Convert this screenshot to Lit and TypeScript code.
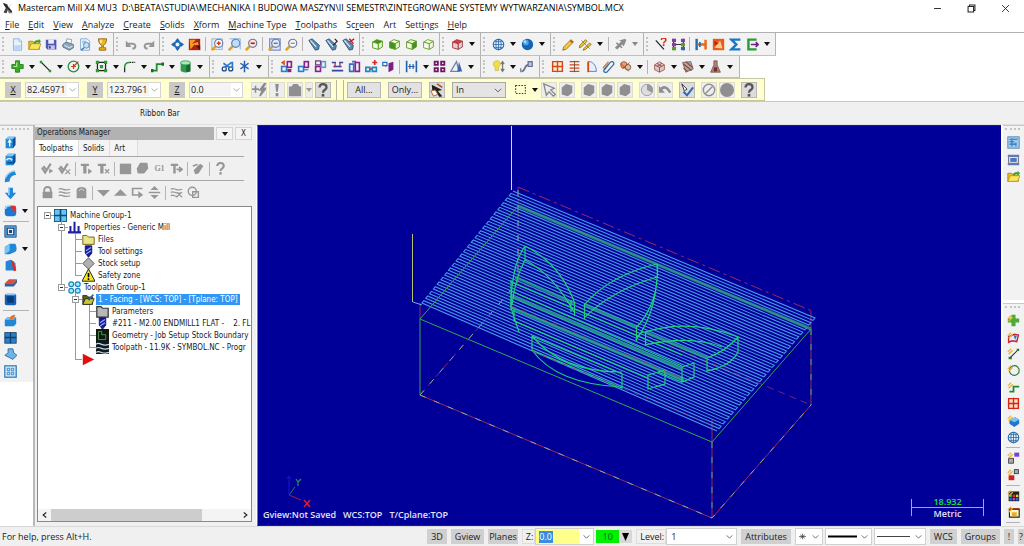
import { LitElement, html, css, svg, nothing } from "lit";
import { customElement, property } from "lit/decorators.js";

const cube = (c: string, t: string, f: string, r: string) => svg`<g stroke=${c} stroke-width="1.2" stroke-linejoin="round"><path d="M2 5 7 2l7 2-5 3z" fill=${t}/><path d="M2 5l7 2v7l-7-2z" fill=${f}/><path d="M9 7l5-3v7l-5 3z" fill=${r}/></g>`;
const lens = (glass: string, mark: unknown) => svg`<path d="M1 15l5-5" stroke="#e0a020" stroke-width="3"/><circle cx="9.5" cy="6.5" r="5" fill=${glass} stroke="#6a7c98" stroke-width="1.4"/>${mark}`;
const torch = (mark: unknown) => svg`<path d="M1 3l4-2 9 8-1 5-4 1z" fill="#5b87b0" stroke="#2b4d70"/><path d="M3 3l7 8" stroke="#d5ecff" stroke-width="1.5"/>${mark}`;
const solid = (mark: unknown) => svg`<path d="M2 4l3-3h9v10l-3 4H2z" fill="#1f86d8"/><path d="M2 4l3-3h9l-3 3z" fill="#7cc4f4"/><path d="M11 4l3-3v10l-3 4z" fill="#0c4f96"/>${mark}`;
const hex = (c: string) => svg`<path d="M2 5l5-4 7 2v8l-5 4-7-2z" fill=${c}/>`;
const q = (c: string) => svg`<path d="M4 5c0-5 8-5 8 0 0 3-4 2.500-4 6" fill="none" stroke=${c} stroke-width="2.600"/><rect x="6.500" y="12.500" width="3" height="3" fill=${c}/>`;
const G = "#969696";
const bits = (a: string, b: string, extra: unknown = nothing) => svg`<g fill="none" stroke-width="2"><rect x="2" y="8" width="6" height="6" stroke=${a}/><rect x="9" y="2" width="5" height="7" stroke=${b}/></g>${extra}`;
const spark = svg`<path d="M1 6l4-4M2 9l5-5" stroke="#e8b030" stroke-width="1.600"/>`;

const ICONS: Record<string, unknown> = {
  app: svg`<path d="M1 1l6 2 2 5-3 7-4-1 3-6z" fill="#444"/><path d="M14 1L9 6l5 9H9L7 9" fill="#777"/><path d="M3 3l10 10" stroke="#222" stroke-width="2"/>`,
  new: svg`<path d="M3 1h7l3 3v11H3z" fill="#e6f1ff" stroke="#84a8d4"/><path d="M10 1v3h3" fill="#fff" stroke="#84a8d4"/><path d="M4 9h8v5H4z" fill="#b9d4f5"/>`,
  open: svg`<path d="M1 4h5l1 2h7v8H1z" fill="#e8c02c" stroke="#a88410"/><path d="M1 14l3-7h12l-3 7z" fill="#fbe55c" stroke="#b89418"/><path d="M7 6c1-3 3-4 6-3V1l3 3-3 3V5c-2-.500-3 0-4 2z" fill="#3b9b2b"/>`,
  save: svg`<path d="M1 2h13v12H3l-2-2z" fill="#5056b4"/><path d="M4 2h7v5H4z" fill="#e9ebff"/><path d="M4 9h8v5H4z" fill="#c5c8ee"/><path d="M5 10h2v3H5z" fill="#30368e"/>`,
  print: svg`<path d="M5 6l1-5 6 1-1 5" fill="#fff" stroke="#7d92ab"/><path d="M1 8l4-3 9 3v4l-5 3-8-4z" fill="#8ea5c0" stroke="#52657d"/><path d="M3 9l6 3 4-2" stroke="#fff" fill="none"/>`,
  preview: svg`<path d="M2 1h8l3 3v11H2z" fill="#eef6ff" stroke="#6f9ccc"/><path d="M4 4h5M4 6h4" stroke="#6f9ccc"/><circle cx="9" cy="9" r="3.500" fill="#bfe2ff" stroke="#4e7aa8"/><path d="M6 12l-3 3" stroke="#4e7aa8" stroke-width="2"/>`,
  cup: svg`<path d="M3 1h10c0 5-2 7-4 8v3h3v3H4v-3h3V9C5 8 3 6 3 1z" fill="#f0b41c" stroke="#8b5a08"/><path d="M6 2v4" stroke="#fff3a0" stroke-width="2"/>`,
  undo: svg`<path d="M3 7h6c5 0 5 6 0 6" fill="none" stroke=${G} stroke-width="2.400"/><path d="M1 3v8h7z" fill=${G}/>`,
  redo: svg`<path d="M13 7H7c-5 0-5 6 0 6" fill="none" stroke=${G} stroke-width="2.400"/><path d="M15 3v8H8z" fill=${G}/>`,
  pan: svg`<path d="M8 0l3 4H5zM8 16l3-4H5zM0 8l4-3v6zM16 8l-4-3v6z" fill="#1a68b8"/><circle cx="8" cy="8" r="3.500" fill="none" stroke="#1a68b8" stroke-width="2"/>`,
  repaint: svg`<path d="M1 1h14v14H1z" fill="#b02010"/><path d="M2 2h8L5 7l7-2 2 8-6-5-5 6z" fill="#f69a28"/><path d="M9 9l6 6V9z" fill="#501008"/>`,
  zin: svg`<path d="M1 1h13v13H1z" fill="#e6eefc" stroke="#88a4d8"/>${lens("#fff", svg`<path d="M9.500 4v5M7 6.500h5" stroke="#d8381c" stroke-width="1.800"/>`)}`,
  zwin: lens("#b9dcff", svg`<path d="M2 1h13v13" fill="none" stroke="#6ea0e0"/>`),
  zout: lens("#ffe5e0", svg`<path d="M7 6.500h5" stroke="#c01810" stroke-width="2"/>`),
  zpr: svg`<path d="M2 1h13v14H2z" fill="#dfe8fc" stroke="#8090c8" stroke-width="1.500"/>${lens("#dfeaff", svg`<path d="M7 6.500h5" stroke="#4060b0" stroke-width="1.500"/>`)}`,
  zhalf: lens("#f4f7ff", svg`<path d="M7 6.500h5" stroke="#c08040" stroke-width="1.500"/>`),
  t1: torch(nothing),
  t2: torch(svg`<path d="M12 1l3 3-5 5" fill="none" stroke="#223" stroke-width="1.500"/>`),
  t3: torch(svg`<path d="M9 5l6-4M9 1l5 6" stroke="#d02020" stroke-width="1.800"/>`),
  c1: cube("#5e9a26", "#3f9420", "#f6ffe6", "#e6f8c8"),
  c2: cube("#5e9a26", "#f6ffe6", "#3f9420", "#e6f8c8"),
  c3: cube("#5e9a26", "#e6f8c8", "#f6ffe6", "#3f9420"),
  c4: cube("#6da435", "#f6ffe6", "#fbfff2", "#eef9dd"),
  c5: cube("#a04048", "#e03838", "#f0c8c8", "#d8d4dc"),
  globe: svg`<circle cx="8" cy="8" r="6.500" fill="#eaf5ff" stroke="#2a6aa8" stroke-width="1.300"/><path d="M1.500 8h13M8 1.500v13M3 4.500h10M3 11.500h10" stroke="#2a6aa8"/><ellipse cx="8" cy="8" rx="3.200" ry="6.500" fill="none" stroke="#2a6aa8"/>`,
  ball: svg`<circle cx="8" cy="8" r="7" fill="#1565b4"/><circle cx="6" cy="5.500" r="3.500" fill="#4fa4e8"/><circle cx="5" cy="4.500" r="1.500" fill="#b9e0ff"/>`,
  pen: svg`<path d="M2 11L11 2l3 3-9 9-4 1z" fill="#f4c840" stroke="#8c6410"/><path d="M11 2l3 3-2 1-2-2z" fill="#c84030"/>`,
  pens: svg`<path d="M1 9L8 2l2 2-7 7-3 1zM6 13l7-7 2 2-7 6-3 1z" fill="#f4c840" stroke="#8c6410"/><path d="M3 3l10 10" stroke="#a87818"/>`,
  hatchg: svg`<path d="M1 12l8-8-3-1 8-2 1 2-3 7-2-2-6 6z" fill="#8c8c8c"/><path d="M3 6l7 6" stroke="#8c8c8c" stroke-width="2"/>`,
  qline: svg`<path d="M1 3l10 11" stroke="#222" stroke-width="1.500"/><g transform="translate(5 -1) scale(.7)">${q("#e02818")}</g>`,
  blocks: svg`<path d="M2 1v14M14 1v14M2 8h12" stroke="#333" stroke-width="1.500"/><g fill="#8a3aa8"><path d="M0 1h5v4H0zM11 1h5v4h-5zM0 6h5v4H0z"/></g><path d="M11 6h5v4h-5zM0 11h5v4H0z" fill="#5c9c30"/><path d="M11 11h5v4h-5z" fill="#2c6ab8"/>`,
  split: svg`<path d="M2 1v14" stroke="#1a70c0" stroke-width="3"/><path d="M3 8h10M13 2v12" stroke="#e86818" stroke-width="3"/><path d="M6 5v6" stroke="#1a70c0" stroke-width="2"/>`,
  orange: svg`<path d="M1 1h14v14H1z" fill="#e85a18"/><path d="M3 12l7-9 3 10z" fill="#ffc890"/><path d="M3 3l5 4-5 2z" fill="#b02808"/>`,
  sigma: svg`<path d="M14 2H3l6 6-6 6h11" fill="none" stroke="#1878c8" stroke-width="3"/>`,
  cgreen: svg`<path d="M13 2H3v12h10" fill="none" stroke="#2c9a38" stroke-width="3"/><path d="M6 8h9M12 5l3 3-3 3" stroke="#702080" stroke-width="2" fill="none"/>`,
  plus: svg`<path d="M5.500 1h5v4.500H15v5h-4.500V15h-5v-4.500H1v-5h4.500z" fill="#3caa28" stroke="#1d7a14"/><path d="M7 3v5H3" stroke="#a8ec90" stroke-width="1.500" fill="none"/>`,
  line: svg`<path d="M2 2l12 12" stroke="#222" stroke-width="1.500"/><path d="M1 1h3v3H1zM12 12h3v3h-3z" fill="#2c9a38"/>`,
  circ: svg`<circle cx="8" cy="8" r="6.500" fill="none" stroke="#2f8a4a" stroke-width="1.600"/><path d="M8 8l6-6M5 8h6M8 5v6" stroke="#e03818" stroke-width="1.500"/>`,
  rect: svg`<path d="M3 3h10v10H3z" fill="none" stroke="#222" stroke-width="1.500"/><path d="M1 1h4v4H1zM11 1h4v4h-4zM1 11h4v4H1zM11 11h4v4h-4zM6 6h4v4H6z" fill="#2c9a38"/>`,
  fillet: svg`<path d="M2 15V9" stroke="#222" stroke-width="1.500"/><path d="M2 9c0-4 2-6 6-6" fill="none" stroke="#2c9a38" stroke-width="2"/><path d="M8 3h7" stroke="#222" stroke-width="1.500" stroke-dasharray="2 1"/>`,
  spline: svg`<path d="M1 13h6V5h8" fill="none" stroke="#1f8c2c" stroke-width="2.200"/><path d="M0 11h3v4H0zM13 3h3v4h-3z" fill="#176a20"/>`,
  cyl: svg`<path d="M2 3v10c0 3 12 3 12 0V3z" fill="#2f9a50"/><path d="M9 5h5v9l-5 1z" fill="#176834"/><ellipse cx="8" cy="3.500" rx="6" ry="2.500" fill="#a8e8b8" stroke="#2f9a50"/>`,
  sci: svg`<circle cx="4" cy="11" r="2.500" fill="none" stroke="#184888" stroke-width="1.500"/><circle cx="12" cy="11" r="2.500" fill="none" stroke="#184888" stroke-width="1.500"/><path d="M5 9l8-6M10 9L3 4M14 2v8" stroke="#2878c8" stroke-width="2"/>`,
  star: svg`<path d="M8 1v14M3 4l10 7M13 4L3 11" stroke="#2060b0" stroke-width="1.800"/>`,
  b1: bits("#2a80d0", "#8a2090", svg`<path d="M1 3l5-3v7z" fill="#e05818"/><path d="M9 11h5v4H9z" fill="#8a2090"/>`),
  b2: bits("#2a80d0", "#8a2090", svg`<path d="M8 12h6" stroke="#2a80d0" stroke-width="1.500"/>`),
  b3: bits("#8a2090", "#58a0c8", svg`<path d="M2 1h6v5H2z" fill="none" stroke="#704080" stroke-width="1.500"/>`),
  b4: svg`<path d="M1 3h5M10 3h5M1 13h14M3 8h10" stroke="#3048a0" stroke-width="2"/><path d="M5 3v6M11 3v6" stroke="#b02060" stroke-width="1.500"/>`,
  b5: svg`<path d="M2 5h5v9H2zM5 2h5" fill="none" stroke="#2a70c8" stroke-width="2"/><path d="M9 3h5v11H9z" fill="none" stroke="#8a2090" stroke-width="2"/>`,
  b6: svg`<path d="M1 9h5v5H1zM9 9h5v5H9z" fill="none" stroke="#1888c8" stroke-width="2"/><path d="M6 11h3M12 0v6M9 3h6" stroke="#d82828" stroke-width="2"/>`,
  b7: svg`<path d="M8 4l6-2v10l-6 3z" fill="#7a2080"/><path d="M1 3h5v4H1zM4 8l3-2" fill="none" stroke="#2a70c8" stroke-width="1.500"/>`,
  dim: svg`<path d="M2 1v14M14 1v14" stroke="#2060b0" stroke-width="2"/><path d="M4 8h8M6 5v6M10 5v6" stroke="#2060b0" stroke-width="1.500"/>`,
  four: svg`<path d="M2 2h4v4H2zM10 2h4v4h-4zM2 10h4v4H2zM10 10h4v4h-4z" fill="none" stroke="#701868" stroke-width="2.200"/>`,
  tri: svg`<path d="M1 14L8 2l3 12z" fill="none" stroke="#7080b0" stroke-width="1.500"/><path d="M11 2l4 12H9z" fill="#3868a8"/>`,
  bulb: svg`<path d="M6 1c6 0 5 6 2 8v4H4V9C0 7 1 1 6 1z" fill="#f0dc48" stroke="#d0bc50"/><path d="M13 3v10M11 5l2-3 2 3M11 11l2 3 2-3" stroke="#777" stroke-width="1.500" fill="none"/>`,
  step: svg`<path d="M2 14c5 0 3-8 8-8h3" fill="none" stroke="#667090" stroke-width="2"/><path d="M10 2h5v6h-5zM1 10v5" fill="#bcc4d8" stroke="#667090" stroke-width="1.500"/>`,
  gridr: svg`<path d="M2 2h12v12H2zM8 1v14M1 8h14" fill="#ffe8d0" stroke="#d04818" stroke-width="1.700"/>`,
  rows: svg`<path d="M2 2h12M2 6h12M2 10h12M2 14h12" stroke="#d04818" stroke-width="1.700"/><path d="M8 1v14" stroke="#704030"/>`,
  sail: svg`<path d="M4 14V2h2c5 1 8 6 8 12z" fill="#e8eefa" stroke="#3870b8"/><path d="M4 2v13" stroke="#d04818" stroke-width="2.200"/>`,
  clip: svg`<path d="M3 12l7-9c4-3 6 2 3 4l-7 8c-3 1-5-1-3-4l5-6" fill="none" stroke="#3870a8" stroke-width="1.600"/><path d="M1 10l7-8" stroke="#d07030" stroke-width="1.500"/>`,
  shell: svg`<circle cx="6" cy="6" r="4" fill="#e8a070" stroke="#a04820"/><circle cx="11" cy="9" r="3.500" fill="#d8c0a8" stroke="#804830"/><path d="M2 4l10 10M4 11l9-8" stroke="#a04820"/>`,
  part: svg`<path d="M2 6l6-4 6 4v6l-6 3-6-3z" fill="#d8c8c8" stroke="#a05040"/><path d="M2 6l6 3 6-3M8 9v6M5 4l6 4M11 4L5 8" stroke="#a03828" fill="none"/>`,
  mesh: svg`<path d="M2 3l10-1 3 9-9 4z" fill="#b0a8a8" stroke="#605858"/><path d="M3 5l10 8M6 2l8 7M3 10l5 4" stroke="#904838" stroke-width="1.500"/>`,
  tower: svg`<path d="M6 1h4v5l4 9H2l4-9z" fill="#b08078" stroke="#78564e"/><path d="M6 9h4v5H6z" fill="#703028"/>`,
  flash: svg`<path d="M4 3v8M0 7h8M14 1L9 8h3l-3 7 7-9h-4l3-5z" stroke="#8c8c8c" fill="#8c8c8c" stroke-width="1.800"/>`,
  bang: svg`<path d="M6 1h4l-1 9H7zM6.500 11.500h3v3.500h-3z" fill="#8c8c8c"/>`,
  block: svg`<path d="M1 4h3l2-3h5l2 3h2v11H1z" fill="#8f8f8f"/>`,
  help: q("#555"),
  hand: svg`<path d="M2 2l12 6-5 1 5 6-3 1-5-6-3 3z" fill="#222"/><path d="M1 9l5-1 3 5-5 2z" fill="#fff" stroke="#b05818"/><path d="M8 1l6 4" stroke="#b05818" stroke-width="2"/>`,
  dash: svg`<path d="M2 3h12v10H2z" fill="none" stroke="#444" stroke-width="1.300" stroke-dasharray="2 1.500"/>`,
  arrow: svg`<path d="M2 1l3 13 3-4 5 5 2-2-5-5 4-2z" fill="#eee" stroke="#888" stroke-width="1.500"/>`,
  hexg: hex("#8f8f8f"),
  half: svg`<circle cx="8" cy="8" r="6.500" fill="#ddd" stroke="#999"/><path d="M8 8V1.500A6.500 6.500 0 0 1 14 11z" fill="#999"/>`,
  bend: svg`<path d="M2 9c4-6 8-5 12 2" fill="none" stroke="#8f8f8f" stroke-width="3"/><path d="M1 3v8h7z" fill="#8f8f8f"/>`,
  pick: svg`<path d="M2 1l3 8 3-2z" fill="#fff" stroke="#222"/><path d="M4 10l4 4 7-9" stroke="#2a68b0" stroke-width="2.200" fill="none"/>`,
  no: svg`<circle cx="8" cy="8" r="6.500" fill="none" stroke="#8f8f8f" stroke-width="1.600"/><path d="M4 12l8-8" stroke="#8f8f8f" stroke-width="1.600"/>`,
  dot: svg`<circle cx="8" cy="8" r="8" fill="#8f8f8f"/>`,
  s1: solid(svg`<path d="M7 13V6M5 8l2-3 2 3" stroke="#fff" stroke-width="1.600" fill="none"/>`),
  s2: solid(svg`<path d="M3 9c2-3 5-3 7 0" stroke="#d8f0ff" stroke-width="2" fill="none"/><path d="M4 12h7" stroke="#0c4f96" stroke-width="2"/>`),
  s3: svg`<path d="M1 15C1 7 6 2 13 1l2 5c-5 0-8 3-8 8z" fill="#1f86d8"/><path d="M2 9c2-4 6-7 11-8" stroke="#9ad4fa" stroke-width="2" fill="none"/>`,
  s4: svg`<path d="M5 1h6v6h4l-7 8-7-8h4z" fill="#1f86d8"/><path d="M6 1v9" stroke="#9ad4fa" stroke-width="2"/>`,
  s5: svg`<rect x="1" y="2" width="14" height="13" rx="3" fill="#1f78d0"/><path d="M2 6c0-3 2-4 6-4" stroke="#a8dcff" stroke-width="2" fill="none"/><path d="M8 2h6l1 7c-3 1-6-2-7-7z" fill="#e03030"/>`,
  s6: svg`<path d="M1 1h14v14H1z" fill="#58a8e8" stroke="#184878"/><path d="M4 4h8v8H4z" fill="#fff" stroke="#184878" stroke-width="1.500"/><path d="M6 6h4v4H6z" fill="#184878"/>`,
  s7: svg`<path d="M1 6l6-4h7c2 4 2 8 0 10l-7 3H1z" fill="#1f86d8"/><path d="M1 6l6-4v9l-6 4z" fill="#7cc4f4"/>`,
  s8: svg`<path d="M2 3l6-2 6 4 1 9H2z" fill="#1f86d8"/><path d="M8 1l4 2 3 11-3 1z" fill="#d83028"/>`,
  s9: svg`<path d="M1 9l5-5h10l-4 5z" fill="#d85040"/><path d="M1 9h11l4-5v4l-4 5H1z" fill="#3a5a9a"/>`,
  s10: svg`<rect x="1" y="1" width="14" height="14" rx="2" fill="#1560b0"/><rect x="4" y="4" width="8" height="8" fill="#0a3a78"/><path d="M2 2h12" stroke="#8cc8f8" stroke-width="1.500"/>`,
  s11: svg`<path d="M1 7l3-3h11v8l-3 3H1z" fill="#1f86d8"/><path d="M1 7l3-3h11l-3 3z" fill="#7cc4f4"/><path d="M6 7c1-4 4-6 8-6l-2 5z" fill="#e87030"/>`,
  s12: svg`<rect x="1" y="2" width="14" height="13" fill="#2a80c8" stroke="#103c68"/><path d="M1 8h14M8 2v13" stroke="#103c68" stroke-width="1.600"/>`,
  s13: svg`<path d="M5 1h6l1 5 4 3-5 5-4-2-6-3 4-3z" fill="#6ab4e8" stroke="#2a6098"/>`,
  s14: svg`<rect x="1" y="1" width="14" height="14" fill="#d0eafc" stroke="#2a78b8" stroke-width="1.500"/><path d="M4 4h3v3H4zM9 4h3v3H9zM4 9h3v3H4zM9 9h3v3H9z" fill="none" stroke="#2a78b8"/>`,
  r1: svg`<rect x="1" y="1" width="14" height="14" fill="#9ccaf0" stroke="#4a80b0"/><path d="M3 4h10M3 7h6M3 10h8M6 3v10M11 8v5" stroke="#3a74b0" stroke-width="1.300"/>`,
  r2: svg`<path d="M1 2h14v3H1zM1 12h14v3H1z" fill="#6878b0"/><rect x="4" y="6" width="8" height="5" fill="#4a78c8"/><path d="M2 5v7M14 5v7" stroke="#445"/>`,
  r4: svg`<path d="M5.500 1h5v4.500H15v5h-4.500V15h-5v-4.500H1v-5h4.500z" fill="#4caa38"/>${spark}`,
  r5: svg`<path d="M2 7l7-3 5 1-2 8-6-1-4 2z" fill="#e8ecf8" stroke="#c02838" stroke-width="1.800"/><path d="M8 5l4 1-2 5" fill="#3a70b8"/>${spark}`,
  r6: svg`<path d="M4 13L13 4" stroke="#222" stroke-width="1.300"/><path d="M2 12h4v3H2zM12 2h3v3h-3z" fill="#2c7a38"/>${spark}`,
  r7: svg`<circle cx="9" cy="8" r="6" fill="none" stroke="#2c7a38" stroke-width="1.400"/>${spark}`,
  r8: svg`<path d="M3 13h5V7h7" fill="none" stroke="#1f8c2c" stroke-width="2.200"/>${spark}`,
  r9: svg`<path d="M2 2h12v12H2zM8 1v14M1 8h14" fill="#ffe0c0" stroke="#d02818" stroke-width="1.700"/>`,
  r10: svg`<path d="M3 7l7-3 5 3v5l-6 4-6-4z" fill="#1f78d0"/><path d="M3 7l7-3 5 3-6 3z" fill="#7cc4f4"/>${spark}`,
  r12: svg`<rect x="9" y="2" width="6" height="5" fill="#7040e0"/><rect x="2" y="9" width="6" height="6" fill="#aaa" stroke="#333"/>${spark}`,
  r13: svg`<rect x="9" y="2" width="5" height="5" fill="#9ab" stroke="#333"/><rect x="2" y="9" width="7" height="6" fill="#d02020"/>${spark}`,
  r14: svg`<rect x="2" y="3" width="13" height="12" fill="#222"/><path d="M3 7h3v3H3z" fill="#20c040"/><path d="M7 7h3v3H7z" fill="#e03030"/><path d="M11 7h3v3h-3z" fill="#e0d020"/><path d="M3 11h3v3H3zM11 11h3v3h-3z" fill="#3060e0"/><path d="M7 11h3v3H7z" fill="#c040c0"/>${spark}`,
  r15: svg`<path d="M3 5h12v10H3z" fill="#fff6c0" stroke="#222" stroke-width="1.400"/><path d="M6 9h6v5H6z" fill="#e8b020"/><path d="M3 5h12" stroke="#a02010" stroke-width="2"/>${spark}`,
  k1: svg`<path d="M1 7l4 6 7-11M3 5l3 4" stroke=${G} stroke-width="2.600" fill="none"/><path d="M10 8l5 3-5 3z" fill=${G}/>`,
  k2: svg`<path d="M1 7l4 6 7-11M3 5l3 4" stroke=${G} stroke-width="2.600" fill="none"/><path d="M9 9l6 6M15 9l-6 6" stroke=${G} stroke-width="1.500"/>`,
  k3: svg`<path d="M1 2h10v3H8v9H4V5H1z" fill=${G}/><path d="M10 8l5 3.500-5 3.500z" fill=${G}/>`,
  k4: svg`<path d="M1 2h10v3H8v9H4V5H1z" fill=${G}/><path d="M10 9l5 5M15 9l-5 5" stroke=${G} stroke-width="1.600"/>`,
  k5: svg`<path d="M1 2h14v13H1z" fill=${G}/>`,
  k6: svg`<path d="M5 1h9l1 7-5 6H2L1 8z" fill=${G}/>`,
  k7: svg`<path d="M1 2h9v3H7v9H4V5H1z" fill=${G}/><path d="M8 9h6M11 6l4 3-4 3" stroke=${G} stroke-width="2" fill="none"/>`,
  k8: svg`<path d="M2 10l8-8 4 3-6 9-4 1z" fill=${G}/><path d="M1 5l6-2" stroke=${G} stroke-width="2"/>`,
  k9: q(G),
  l1: svg`<path d="M2 7h12v8H2z" fill=${G}/><path d="M4 8V5c0-5 8-5 8 0v3" fill="none" stroke=${G} stroke-width="2.200"/>`,
  l2: svg`<path d="M1 4c4-3 5 3 14 0M1 8c4-3 5 3 14 0M1 12c4-3 5 3 14 0" stroke=${G} stroke-width="1.600" fill="none"/>`,
  l3: svg`<path d="M2 5c0-5 12-5 12 0v10H2z" fill=${G}/><path d="M5 6c2-3 4-3 6 0" stroke="#f0f0f0" fill="none"/>`,
  dn: svg`<path d="M0 5h16l-8 8z" fill=${G}/>`,
  up: svg`<path d="M0 12h16L8 4z" fill=${G}/>`,
  ins: svg`<path d="M14 3H2v8h9" fill="none" stroke=${G} stroke-width="2"/><path d="M9 6l6 5-6 4z" fill=${G}/>`,
  ud: svg`<path d="M8 0l5 5H3zM8 16l5-5H3zM1 7h14v2H1z" fill=${G}/>`,
  l4: svg`<path d="M1 4c4-3 5 3 14 0M1 8c4-3 5 3 14 0M1 12c4-3 5 3 9 0M8 14l6-6M9 8l6 6" stroke=${G} stroke-width="1.400" fill="none"/>`,
  l5: svg`<circle cx="6.500" cy="6.500" r="5" fill="none" stroke=${G} stroke-width="1.700"/><path d="M7 7h7v7H7z" fill="none" stroke=${G} stroke-width="1.700"/>`,
  m1: svg`<path d="M0 0h16v16H0z" fill="#0a4a78"/><path d="M1 1h6v6H1zM9 1h6v6H9zM1 9h6v6H1zM9 9h6v6H9z" fill="#68c4f0"/>`,
  m2: svg`<path d="M3 14V6M8 14V1M13 14V6M0 14h16" stroke="#2020a0" stroke-width="2.500"/>`,
  fold: svg`<path d="M1 3h5l2 2h7v9H1z" fill="#ece488" stroke="#706820" stroke-width="1.200"/>`,
  gfold: svg`<path d="M1 2h5l2 2h7v11H1z" fill="#b8b8b8" stroke="#333" stroke-width="1.500"/>`,
  tool: svg`<path d="M4 1h8v9l-4 5-4-5z" fill="#1818a0" stroke="#10104a"/><path d="M5 7l6-4M5 11l6-4" stroke="#8fb0ff" stroke-width="1.500"/>`,
  dia: svg`<path d="M8 1l7 7-7 7-7-7z" fill="#b0b0b0" stroke="#444"/>`,
  warn: svg`<path d="M8 0l8 15H0z" fill="#f8e820" stroke="#222" stroke-width="1.200"/><path d="M8 5v5M8 11.500v2" stroke="#000" stroke-width="2"/>`,
  m3: svg`<g fill="#a8ecff" stroke="#1888c0" stroke-width="1.500"><circle cx="4" cy="4" r="3"/><circle cx="12" cy="4" r="3"/><circle cx="4" cy="12" r="3"/><circle cx="12" cy="12" r="3"/></g>`,
  face: svg`<path d="M1 3h5l2 2h5v9H1z" fill="#606010" stroke="#222"/><path d="M1 14l3-7h11l-3 7z" fill="#c8c830" stroke="#222"/><path d="M8 9l6-7" stroke="#3060a0" stroke-width="2"/>`,
  geo: svg`<path d="M0 0h16v16H0z" fill="#101810"/><path d="M3 3v10h9V7H7V3z" fill="none" stroke="#58b058"/>`,
  path: svg`<path d="M0 0h16v16H0z" fill="#101820"/><path d="M0 4c5-4 7 4 16 0M0 9c5-4 7 4 16 0M0 14c5-4 7 4 16 0" stroke="#c8dce8" stroke-width="1.500" fill="none"/>`,
  play: svg`<path d="M1 1l14 7-14 7z" fill="#e01010"/>`,
  ast: svg`<path d="M8 3v10M4 5l8 6M12 5l-8 6M2 8h12" stroke="#333" stroke-width="1.200"/>`,
  min: svg`<path d="M3 8h10" stroke="#333" stroke-width="1.500"/>`,
  max: svg`<path d="M3 5h8v8H3zM5 5V3h8v8h-2" fill="none" stroke="#222" stroke-width="1.500"/>`,
  close: svg`<path d="M3 3l10 10M13 3L3 13" stroke="#222" stroke-width="1.300"/>`,
  chev: svg`<path d="M3 6l5 5 5-5" fill="none" stroke="#555" stroke-width="1.500"/>`,
  cl: svg`<path d="M10 4L5 8l5 4" fill="none" stroke="#222" stroke-width="1.800"/>`,
  cr: svg`<path d="M6 4l5 4-5 4" fill="none" stroke="#222" stroke-width="1.800"/>`,
};

const icon = (n: string, size = 13) =>
  html`<svg width=${size} height=${size} viewBox="0 0 16 16" aria-hidden="true">${ICONS[n]}</svg>`;
const caretGlyph = html`<svg width="6" height="4" viewBox="0 0 6 4" aria-hidden="true"><path d="M0 0h6L3 4z" fill="currentColor"/></svg>`;

/** Toolbar notation: "|" separates, "v" is a drop-down arrow, "V" a disabled one. */
const tools = (list: string) =>
  list.split(" ").map((n) =>
    n === "|" ? html`<i class="rule"></i>`
    : n === "v" || n === "V" ? html`<button class="caret" ?disabled=${n === "V"} aria-label="More">${caretGlyph}</button>`
    : n === "G1" ? html`<button class="tool g1">G1</button>`
    : html`<button class="tool" aria-label=${n}>${icon(n)}</button>`);

const shared = css`
  * { box-sizing: border-box; }
  svg { display: block; flex: none; }
  button, input, select { font: inherit; color: inherit; margin: 0; padding: 0; border: 0; background: none; border-radius: 0; outline: 0; }
  button { display: flex; align-items: center; justify-content: center; white-space: nowrap; }
  .tool { width: 17px; height: 17px; flex: none; }
  .caret { width: 12px; height: 17px; flex: none; color: #111; }
  .caret:disabled { color: #888; }
  .rule { flex: none; background: #b4b4b4; width: 1px; height: 14px; margin: 0 3px 0 2px; }
`;

@customElement("tool-rows")
class ToolRows extends LitElement {
  static styles = [shared, css`
    :host { display: block; border-top: 1px solid #b0b0b0; background: #fff; }
    .row { display: flex; height: 23px; }
    .group { display: flex; align-items: center; padding: 0 2px 0 9px; background: #f2f2f2; border-right: 1px solid #b4b4b4; border-bottom: 1px solid #c0c0c0; position: relative; }
    .group::before { content: ""; position: absolute; left: 2px; top: 4px; bottom: 4px; border-left: 2px dotted #c4c4c4; }
    .second { height: 22px; }
    .second .group { padding-right: 4px; }
    .second .caret { width: 11px; }
    .yellow { display: flex; width: fit-content; align-items: center; height: 23px; background: #ffffd2; border: 1px solid #c8c8a0; border-left: 0; padding: 0 5px; }
    .key { width: 16px; height: 16px; background: #c8c8c8; text-decoration: underline; }
    .combo { display: flex; align-items: center; width: 54px; height: 16px; margin: 0 8px 0 4px; background: #fff; border: 1px solid #d4d4d4; }
    .combo input { flex: 1; min-width: 0; padding-left: 1px; background: #f4f4f4; }
    .combo button { width: 11px; }
    .combo button svg { opacity: .6; }
    .pick { display: flex; align-items: center; position: relative; width: 54px; height: 16px; background: #e4e4e4; border: 1px solid #a8a8a8; margin: 0 6px 0 5px; }
    .pick select { appearance: none; flex: 1; height: 14px; padding-left: 3px; }
    .pick svg { position: absolute; right: 2px; pointer-events: none; }
    .boxed { width: 16px; height: 16px; background: #ededed; border: 1px solid #dcdcd0; margin-right: 2px; flex: none; }
    .dark { background: #dcdcdc; border-color: #b8b8b8; }
    .thin { width: 8px; color: #999; }
    .text { width: 34px; height: 16px; background: #e2e2e2; border: 1px solid #b8b8b8; margin-right: 7px; }
    .edge { width: 1px; height: 20px; background: #b8b8a0; margin: 0 3px; }
    .space { width: 4px; }
  `];
  coord(key: string, value: string) {
    return html`<button class="key" aria-label="Lock ${key}">${key}</button>
      <span class="combo"><input aria-label=${key} .value=${value}><button aria-label="Recent ${key}">${icon("chev", 9)}</button></span>`;
  }
  box(names: string, cls = "") {
    return names.split(" ").map((n) => html`<button class="boxed ${cls}" aria-label=${n}>${icon(n, 14)}</button>`);
  }
  render() {
    const first = ["new open save print preview cup", "undo redo", "pan repaint | zin zwin zout | zpr zhalf | t1 t2 t3", "c1 c2 c3 c4", "c5 v", "globe v ball v", "pen pens v | hatchg V", "qline blocks | split orange sigma cgreen v"];
    const second = ["plus v line v circ v rect v fillet v spline v cyl v", "sci star v", "b1 b2 b3 b4 b5 b6 b7 | dim v four tri v", "bulb v step", "gridr rows sail clip shell v | part v mesh v tower v"];
    return html`
      <div class="row">${first.map((g) => html`<div class="group" role="toolbar">${tools(g)}</div>`)}</div>
      <div class="row second">${second.map((g) => html`<div class="group" role="toolbar">${tools(g)}</div>`)}</div>
      <div class="yellow">
        ${this.coord("X", "82.45971")}${this.coord("Y", "123.7961")}${this.coord("Z", "0.0")}
        ${this.box("flash bang block")}<button class="boxed thin" aria-label="Options">${caretGlyph}</button>${this.box("help", "dark")}
        <i class="edge"></i><i class="edge"></i>
        <button class="text">All...</button><button class="text">Only...</button>${this.box("hand", "dark")}
        <label class="pick"><select aria-label="Selection mode"><option>In</option></select>${icon("chev", 10)}</label>
        ${tools("dash v")}${this.box("arrow hexg")}<i class="space"></i>${this.box("hexg hexg hexg")}<i class="space"></i>${this.box("half bend")}<i class="space"></i>${this.box("pick", "dark")}<i class="space"></i>${this.box("no dot")}<i class="space"></i>${this.box("help", "dark")}
      </div>`;
  }
}

@customElement("side-tools")
class SideTools extends LitElement {
  @property() list = "";
  static styles = [shared, css`
    :host { display: flex; flex-direction: column; background: #f2f2f2; padding: 2px 0 2px 2px; border-top: 1px solid #c8c8c8; }
    .dots { flex: none; border-top: 2px dotted #c4c4c4; margin: 0 4px 4px 0; }
    .line { display: flex; flex: 0 1 17px; min-height: 0; align-items: center; }
    .rule { display: block; width: auto; height: 1px; margin: 2px 4px 1px 1px; }
  `];
  render() {
    return html`<i class="dots"></i>${this.list.split(",").map((r) =>
      r === "|" ? html`<i class="rule"></i>` : html`<div class="line">${tools(r)}</div>`)}`;
  }
}

type Row = { guides: string; icon: string; text?: string; on?: boolean };
const ROWS: Row[] = [
  { guides: "r", icon: "m1", text: "Machine Group-1" },
  { guides: " m", icon: "m2", text: "Properties - Generic Mill" },
  { guides: " vt", icon: "fold", text: "Files" },
  { guides: " vt", icon: "tool", text: "Tool settings" },
  { guides: " vt", icon: "dia", text: "Stock setup" },
  { guides: " vl", icon: "warn", text: "Safety zone" },
  { guides: " e", icon: "m3", text: "Toolpath Group-1" },
  { guides: "  m", icon: "face", text: "1 - Facing - [WCS: TOP] - [Tplane: TOP]", on: true },
  { guides: "  vt", icon: "gfold", text: "Parameters" },
  { guides: "  vt", icon: "tool", text: "#211 - M2.00 ENDMILL1 FLAT -    2. FL" },
  { guides: "  vt", icon: "geo", text: "Geometry - Job Setup Stock Boundary" },
  { guides: "  vl", icon: "path", text: "Toolpath - 11.9K - SYMBOL.NC - Progr" },
  { guides: "  l", icon: "play" },
];
const guide = (g: string) => {
  const up = svg`<path d="M7.500 0v6"/>`, down = svg`<path d="M7.500 6v6"/>`, right = svg`<path d="M7 6.500h7"/>`;
  const knob = svg`<rect x="4.500" y="3.500" width="6" height="6" fill="#fff"/><path d="M6 6.500h3" stroke="#333"/>`;
  return html`<svg width="14" height="12" viewBox="0 0 14 12" fill="none" stroke="#9a9a9a">
    ${"mevtl".includes(g) ? up : nothing}${"mevt".includes(g) && g !== "e" ? down : nothing}${"rmetl".includes(g) ? right : nothing}${"rme".includes(g) ? knob : nothing}</svg>`;
};

@customElement("operations-manager")
class OperationsManager extends LitElement {
  static styles = [shared, css`
    :host { display: flex; flex-direction: column; min-height: 0; background: #f0f0f0; border-left: 2px solid #b8b8b8; border-right: 1px solid #fff; padding: 2px 4px 4px 0; font-family: "DejaVu Sans Condensed", "DejaVu Sans", sans-serif; font-stretch: condensed; font-size: 8px; }
    .head { display: flex; height: 13px; gap: 2px; flex: none; }
    h2 { flex: 1; margin: 0; padding-left: 2px; font-size: 8px; line-height: 12px; font-weight: 400; background: #b2b2b2; }
    .head button { width: 17px; background: #f4f4f4; border: 1px solid #d4d4d4; }
    .tabs { display: flex; height: 16px; flex: none; }
    .tab { padding: 0 5px 0 4px; background: #f4f4f4; border-right: 1px solid #ddd; }
    .tab.on { background: #fff; }
    .wide { padding-right: 12px; }
    .tools { display: flex; align-items: center; height: 24px; flex: none; margin: 0 8px 0 0; padding-left: 4px; border-top: 1px solid #a8a8a8; }
    .tools .rule { margin: 0 2px; }
    .g1 { font: bold 8px "Liberation Serif", serif; color: #969696; }
    .tree { flex: 1; display: flex; flex-direction: column; margin: 2px 0 0 2px; background: #fff; border: 1px solid #888; min-width: 0; min-height: 0; }
    .rows { flex: 1; overflow: hidden; padding: 2px 0 0 2px; }
    .item { display: flex; align-items: center; height: 12px; white-space: pre; }
    .item span { line-height: 11px; padding: 0 2px; margin-left: 1px; }
    .item .on { background: #3296f4; color: #fff; }
    .bar { display: flex; height: 12px; background: #f4f4f4; }
    .bar button { width: 13px; }
    .track { flex: 1; }
    .thumb { width: 81%; height: 12px; background: #cdcdcd; }
  `];
  render() {
    return html`
      <div class="head"><h2>Operations Manager</h2><button aria-label="Menu">${caretGlyph}</button><button aria-label="Close panel">X</button></div>
      <div class="tabs" role="tablist"><button class="tab on" role="tab">Toolpaths</button><button class="tab" role="tab">Solids</button><button class="tab wide" role="tab">Art</button></div>
      <div class="tools">${tools("k1 k2 | k3 k4 | k5 k6 G1 k7 | k8 | k9")}</div>
      <div class="tools">${tools("l1 l2 l3 | dn up ins ud | l4 l5")}</div>
      <div class="tree">
        <div class="rows" role="tree">${ROWS.map((r) => html`<div class="item" role="treeitem">${[...r.guides].map(guide)}${icon(r.icon, 13)}${r.text ? html`<span class=${r.on ? "on" : ""}>${r.text}</span>` : nothing}</div>`)}</div>
        <div class="bar"><button aria-label="Scroll left">${icon("cl", 10)}</button><div class="track"><div class="thumb"></div></div><button aria-label="Scroll right">${icon("cr", 10)}</button></div>
      </div>`;
  }
}

/** Zig-zag facing passes between the back edge and the front edge of the stock. */
const PASSES = 49;
const facing = () => {
  const pts: string[] = [];
  for (let i = 0; i < PASSES; i++) {
    const t = i / (PASSES - 1);
    const l = [513 - 91 * t, 191 + 112 * t];
    const r = [815 - 98 * t, 318 + 113 * t];
    const pair = i % 2 ? [r, l] : [l, r];
    pts.push(...pair.map((p) => p.map((n) => n.toFixed(1)).join(",")));
  }
  return pts.join(" ");
};

@customElement("graphics-view")
class GraphicsView extends LitElement {
  static styles = [shared, css`
    :host { display: block; position: relative; overflow: hidden; background: #000099; border-left: 1px solid #6a74b8; border-top: 1px solid #202060; border-bottom: 1px solid #202060; color: #e4e4f4; font-weight: 600; font-size: 9px; }
    .scene { width: 100%; height: 100%; position: absolute; inset: 0; }
    .views { position: absolute; left: 5px; bottom: 4px; display: flex; gap: 7px; line-height: 12px; }
    .scale { position: absolute; right: 17px; bottom: 6px; width: 73px; text-align: center; line-height: 11px; }
    .scale::before { content: ""; position: absolute; inset: 2px 0 3px; border: solid #a8a8b0; border-width: 0 1px; }
    .num { color: #20e040; border-bottom: 1px solid #a8a8b0; line-height: 10px; }
  `];
  render() {
    return html`
      <svg class="scene" viewBox="258 126 743 399" fill="none" role="img" aria-label="Facing toolpath over the stock">
        <g stroke="#a02858" >
          <path d="M420 303v16M712 420v22M811 311v18"/>
          <path d="M518 187l294 124" stroke-dasharray="12 4 3 4"/>
          <path d="M420 395l98-113 293 123M518 187v95" stroke-dasharray="7 5" opacity=".8"/>
          <path d="M420 395l292 123 99-113"/>
          <path d="M712 442v76M811 329v76"/>
        </g>
        <g stroke="#8fb08c" stroke-dasharray="6 9"><path d="M420 395l292 123 99-113M420 395l98-113M518 190v92"/><path stroke="#38b070" d="M712 442v76M811 329v76"/></g>
        <polyline points=${facing()} stroke="#4a98e6" stroke-width="1.100"/>
        <path d="M413 302l9 3" stroke="#6aa8f0"/>
        <path d="M511.500 125v65" stroke="#cfe0c8"/><path d="M412.500 234v68" stroke="#b8c070"/>
        <path d="M518 206l-98 113v76M420 319l292 123 99-113" stroke="#2fa850"/>
        <path d="M518 206l293 123" stroke="#2f9a80" stroke-width="3" opacity=".8"/>
        <g stroke="#28a888" stroke-width="3" opacity=".8"><path d="M515 277l59 26M584 305l52 22M645 332l62 26M511 296l171 73M514 309l170 71"/></g>
        <g stroke="#1cd07c" stroke-width="1.200">
          <path d="M525 246q-14 20-14 62l3 1M525 260q-10 18-13 45M525 246q36 18 50 58M525 260q28 14 49 52M525 246v14M574.500 302v14M571 300v12"/>
          <path d="M584.500 305v14M584 305q26-30 73-41M584 318q28-28 73-41M657.500 264v14M657 264q3 38-21 64M657 278q-2 36-21 62M636.500 326v15"/>
          <path d="M645.500 332v14M645 332q46-14 93 5v15M645 345q46-10 77 2M738 337q-12 14-31 21v13q24-5 31-19M636 340q3-8 9-8"/>
          <path d="M511 280v28l8 24M511 282l171 73M511 291l171 75M514 309v12l134 57M682 367l12-4v14l-12 5zM648 375l17-5v14l-17 5zM658 372l24 10"/>
          <path d="M532 336l90 38v14l-90-38zM532 336q30 36 90 36M532 350q24 34 90 37"/>
        </g>
        <path d="M512 306l170 72M532 351l182 75" stroke="#a03060" stroke-dasharray="5 6" opacity=".7"/>
        <path d="M289 495l6-8" stroke="#208048"/><path d="M289 495l12 5" stroke="#a02040"/><path d="M289 495v-18M287 479l2-3 2 3" stroke="#1818c8"/>
        <path d="M296 479l2 3v4M301 479l-3 3" stroke="#209050" stroke-width="1.300"/><path d="M304 500l6 7M310 500l-6 7" stroke="#e01838" stroke-width="1.500"/>
      </svg>
      <div class="views"><span>Gview:Not Saved</span><span>WCS:TOP</span><span>T/Cplane:TOP</span></div>
      <div class="scale"><div class="num">18.932</div>Metric</div>`;
  }
}

@customElement("status-bar")
class StatusBar extends LitElement {
  static styles = [shared, css`
    :host { display: flex; align-items: center; height: 20px; padding-left: 2px; background: #f0f0f0; border-top: 1px solid #d8d8d8; overflow: hidden; white-space: nowrap; }
    .msg { flex: 1; }
    .btn { height: 15px; background: #d0d0d0; padding: 0 4px; margin-right: 4px; flex: none; }
    .tight { padding: 0 1px; }
    .btn:last-child { margin-right: 0; }
    .lab { height: 15px; line-height: 13px; padding: 0 1px 0 3px; border: 1px solid #ddd; flex: none; }
    .combo { display: flex; align-items: center; position: relative; height: 17px; background: #fff; border: 1px solid #d0d0d0; margin-right: 2px; flex: none; }
    .combo select { appearance: none; position: absolute; inset: 0; width: 100%; padding-left: 4px; }
    .chev { position: absolute; right: 2px; pointer-events: none; }
    .z { width: 59px; background: #ffff8c; padding-right: 14px; }
    .z input { width: 14px; height: 12px; margin-left: 3px; background: #3c8ce0; color: #fff; }
    .zb { position: absolute; right: 0; width: 14px; height: 15px; background: #fff; }
    .level { width: 71px; margin-right: 4px; }
    .point { width: 28px; padding-left: 2px; }
    .style { width: 47px; padding-left: 2px; }
    .width { width: 52px; padding-left: 2px; margin-right: 4px; }
    .color { height: 13px; width: 23px; background: #00f000; color: #063; flex: none; }
    .drop { height: 13px; width: 13px; background: #d8d8d8; margin-right: 4px; flex: none; }
  `];
  render() {
    return html`
      <span class="msg">For help, press Alt+H.</span>
      <button class="btn">3D</button><button class="btn">Gview</button><button class="btn tight">Planes</button>
      <label class="lab" for="z">Z:</label><span class="combo z"><input id="z" .value=${"0.0"}><button class="zb" aria-label="Recent Z">${icon("chev", 9)}</button></span>
      <button class="color" aria-label="Colour">10</button><button class="drop" aria-label="Choose colour"><svg width="7" height="8" viewBox="0 0 7 8"><path d="M0 0h7L3.500 8z"/></svg></button>
      <label class="lab" for="level">Level:</label><span class="combo level"><select id="level"><option>1</option></select><span class="chev">${icon("chev", 9)}</span></span>
      <button class="btn">Attributes</button>
      <span class="combo point">${icon("ast", 9)}<select aria-label="Point style"><option></option></select><span class="chev">${icon("chev", 9)}</span></span>
      <span class="combo style"><svg width="29" height="3"><path d="M0 1.500h29" stroke="#000" stroke-width="2"/></svg><select aria-label="Line style"><option></option></select><span class="chev">${icon("chev", 9)}</span></span>
      <span class="combo width"><svg width="33" height="3"><path d="M0 1.500h33" stroke="#444"/></svg><select aria-label="Line width"><option></option></select><span class="chev">${icon("chev", 9)}</span></span>
      <button class="btn">WCS</button><button class="btn">Groups</button><button class="btn">!</button><button class="btn tight">?</button>`;
  }
}

@customElement("app-root")
export class AppRoot extends LitElement {
  static styles = [shared, css`
    :host { display: flex; flex-direction: column; height: 100vh; overflow: hidden; background: #fff; color: #1a1a1a; font-family: "Open Sans", "Noto Sans", sans-serif; font-size: 9px; }
    .title { display: flex; align-items: center; height: 16px; padding: 0 4px 0 2px; gap: 4px; flex: none; }
    h1 { flex: 1; margin: 0; font-size: 9px; font-weight: 400; white-space: pre; color: #000; line-height: 16px; overflow: hidden; }
    .win { width: 30px; }
    .menu { display: flex; height: 16px; align-items: center; padding-left: 5px; gap: 9px; flex: none; white-space: nowrap; }
    .menu a { color: inherit; text-decoration: none; }
    .ribbon { height: 24px; flex: none; background: #f0f0f0; padding-left: 140px; line-height: 23px; border-bottom: 1px solid #e0e0e0; font-family: "DejaVu Sans Condensed", "DejaVu Sans", sans-serif; font-stretch: condensed; font-size: 8px; border-top: 1px solid #c8c8c8; }
    .main { flex: 1; min-height: 0; display: grid; grid-template-columns: 33px 224px 1fr 23px; grid-template-rows: minmax(0, 1fr); }
    .right { display: flex; flex-direction: column; gap: 3px; padding-left: 2px; min-height: 0; }
    .upper { height: 175px; flex: none; }
    .lower { flex: 1; min-height: 0; }
    status-bar { flex: none; }
  `];
  render() {
    const menu = ["_File", "_Edit", "_View", "_Analyze", "_Create", "_Solids", "_Xform", "_Machine Type", "_Toolpaths", "Sc_reen", "Art", "Sett_ings", "_Help"];
    return html`
      <header class="title">${icon("app", 12)}<h1>Mastercam Mill X4 MU3  D:\\BEATA\\STUDIA\\MECHANIKA I BUDOWA MASZYN\\II SEMESTR\\ZINTEGROWANE SYSTEMY WYTWARZANIA\\SYMBOL.MCX</h1>
        <button class="win" aria-label="Minimize">${icon("min", 11)}</button><button class="win" aria-label="Restore">${icon("max", 11)}</button><button class="win" aria-label="Close">${icon("close", 11)}</button></header>
      <nav class="menu">${menu.map((m) => {
        const [a, b] = m.includes("_") ? m.split("_") : [m, ""];
        return html`<a href="#">${a}<u>${b.slice(0, 1)}</u>${b.slice(1)}</a>`;
      })}</nav>
      <tool-rows></tool-rows>
      <div class="ribbon">Ribbon Bar</div>
      <main class="main">
        <div><side-tools list="s1,s2,s3,s4,s5 v,|,s6,s7 v,s8,s9,s10,|,s11,s12,s13,s14"></side-tools></div>
        <operations-manager></operations-manager>
        <graphics-view></graphics-view>
        <div class="right"><side-tools class="upper" list="r1,r2,open"></side-tools><side-tools class="lower" list="r4,r5,r6,r7,r8,r9,r10,globe,|,r12,r13,|,r14,r15,|"></side-tools></div>
      </main>
      <status-bar></status-bar>`;
  }
}
